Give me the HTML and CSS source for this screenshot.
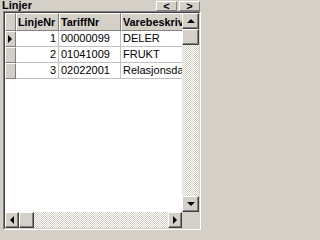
FILE: index.html
```html
<!DOCTYPE html>
<html>
<head>
<meta charset="utf-8">
<link rel="stylesheet" href="styles.css">
</head>
<body>
<div class="panel">
  <div class="titlebar">
    <span class="title">Linjer</span>
    <div class="navbtns">
      <div class="navbtn">&lt;</div>
      <div class="navbtn">&gt;</div>
    </div>
  </div>
  <div class="grid">
    <div class="gridbody">
      <div class="data">
        <div class="row head">
          <div class="ind hcell"></div>
          <div class="cell hcell c1">LinjeNr</div>
          <div class="cell hcell c2">TariffNr</div>
          <div class="cell hcell c3">Varebeskriv</div>
        </div>
        <div class="row">
          <div class="ind"><span class="cur"></span></div>
          <div class="cell c1 num">1</div>
          <div class="cell c2">00000099</div>
          <div class="cell c3">DELER</div>
        </div>
        <div class="row">
          <div class="ind"></div>
          <div class="cell c1 num">2</div>
          <div class="cell c2">01041009</div>
          <div class="cell c3">FRUKT</div>
        </div>
        <div class="row">
          <div class="ind"></div>
          <div class="cell c1 num">3</div>
          <div class="cell c2">02022001</div>
          <div class="cell c3">Relasjonsdatabase</div>
        </div>
      </div>
      <div class="vscroll">
        <div class="sbtn"><span class="arr up"></span></div>
        <div class="thumb v"></div>
        <div class="track"></div>
        <div class="sbtn"><span class="arr down"></span></div>
      </div>
      <div class="hscroll">
        <div class="sbtn"><span class="arr left"></span></div>
        <div class="thumb h"></div>
        <div class="track"></div>
        <div class="sbtn"><span class="arr right"></span></div>
      </div>
      <div class="corner"></div>
    </div>
  </div>
</div>
</body>
</html>
```
FILE: styles.css
```css
html, body {
  margin: 0;
  padding: 0;
  background: #d4d0c8;
}
body {
  width: 204px;
  height: 233px;
  overflow: hidden;
  font-family: "Liberation Sans", Arial, sans-serif;
  font-size: 11px;
  color: #000;
}
.panel {
  width: 204px;
  height: 233px;
  display: flex;
  flex-direction: column;
}
.titlebar {
  height: 11px;
  display: flex;
  align-items: flex-start;
  justify-content: space-between;
  padding: 0 4px 0 2px;
}
.title {
  font-weight: bold;
  font-size: 11px;
  line-height: 11px;
}
.navbtns {
  display: flex;
  gap: 2px;
  margin-top: 1px;
}
.navbtn {
  width: 21px;
  height: 10px;
  box-sizing: border-box;
  border-top: 1px solid #fff;
  border-left: 1px solid #fff;
  border-right: 1px solid #808080;
  border-bottom: 1px solid #808080;
  font-weight: bold;
  font-size: 11px;
  line-height: 9px;
  text-align: center;
}
.grid {
  margin-left: 3px;
  width: 198px;
  height: 219px;
  box-sizing: border-box;
  border-top: 1px solid #808080;
  border-left: 1px solid #808080;
  border-right: 1px solid #fff;
  border-bottom: 1px solid #fff;
}
.gridbody {
  width: 100%;
  height: 100%;
  box-sizing: border-box;
  border-top: 1px solid #404040;
  border-left: 1px solid #404040;
  border-right: 1px solid #d4d0c8;
  border-bottom: 1px solid #d4d0c8;
  display: grid;
  grid-template-columns: 1fr 17px;
  grid-template-rows: 1fr 16px;
  background: #fff;
}
.data {
  overflow: hidden;
  background: #fff;
}
.row {
  display: flex;
  height: 16px;
}
.row.head {
  height: 18px;
}
.ind {
  width: 11px;
  flex: none;
  box-sizing: border-box;
  background: #d4d0c8;
  border-top: 1px solid #fff;
  border-left: 1px solid #fff;
  border-right: 1px solid #808080;
  border-bottom: 1px solid #808080;
  position: relative;
}
.cell {
  flex: none;
  box-sizing: border-box;
  border-right: 1px solid #c0c0c0;
  border-bottom: 1px solid #c0c0c0;
  padding: 0 2px;
  line-height: 15px;
  white-space: nowrap;
  overflow: hidden;
  font-size: 11px;
}
.hcell {
  background: #d4d0c8;
  border-top: 1px solid #fff;
  border-left: 1px solid #fff;
  border-right: 1px solid #808080;
  border-bottom: 1px solid #808080;
  font-weight: bold;
  font-size: 10.8px;
  line-height: 16px;
  padding: 0 1px;
}
.c1 { width: 43px; }
.c2 { width: 62px; }
.c3 { width: 80px; }
.num { text-align: right; }
.cur {
  position: absolute;
  left: 2px;
  top: 3px;
  width: 0;
  height: 0;
  border-top: 4px solid transparent;
  border-bottom: 4px solid transparent;
  border-left: 4px solid #000;
}
.vscroll {
  display: flex;
  flex-direction: column;
  grid-row: 1;
  grid-column: 2;
}
.hscroll {
  display: flex;
  grid-row: 2;
  grid-column: 1;
}
.corner {
  background: #d4d0c8;
}
.track {
  flex: 1;
  background: repeating-conic-gradient(#d4d0c8 0 25%, #fff 0 50%) 0 0 / 2px 2px;
}
.sbtn, .thumb {
  flex: none;
  box-sizing: border-box;
  background: #d4d0c8;
  border-top: 1px solid #fff;
  border-left: 1px solid #fff;
  border-right: 1px solid #404040;
  border-bottom: 1px solid #404040;
  box-shadow: inset -1px -1px 0 #808080;
  display: flex;
  align-items: center;
  justify-content: center;
}
.vscroll .sbtn, .thumb.v {
  width: 17px;
  height: 16px;
}
.hscroll .sbtn {
  width: 14px;
  height: 16px;
}
.thumb.h {
  width: 15px;
  height: 16px;
}
.arr {
  width: 0;
  height: 0;
}
.arr.up {
  border-left: 4px solid transparent;
  border-right: 4px solid transparent;
  border-bottom: 4px solid #000;
}
.arr.down {
  border-left: 4px solid transparent;
  border-right: 4px solid transparent;
  border-top: 4px solid #000;
}
.arr.left {
  border-top: 4px solid transparent;
  border-bottom: 4px solid transparent;
  border-right: 4px solid #000;
}
.arr.right {
  border-top: 4px solid transparent;
  border-bottom: 4px solid transparent;
  border-left: 4px solid #000;
}
```
